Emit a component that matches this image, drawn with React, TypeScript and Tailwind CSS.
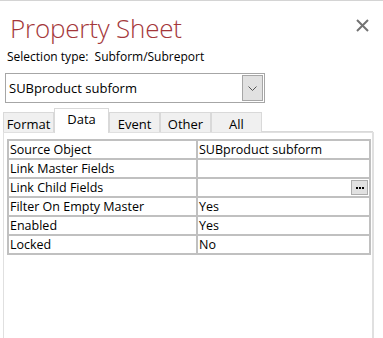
import React from 'react';

const rows = [
  { label: 'Source Object', value: 'SUBproduct subform' },
  { label: 'Link Master Fields', value: '' },
  { label: 'Link Child Fields', value: '', builder: true },
  { label: 'Filter On Empty Master', value: 'Yes' },
  { label: 'Enabled', value: 'Yes' },
  { label: 'Locked', value: 'No' },
];

const tabs = ['Format', 'Data', 'Event', 'Other', 'All'];

export default function App() {
  return (
    <div
      className="w-[383px] h-[338px] overflow-hidden bg-white border-t border-[#d4d4d4] text-black"
      style={{ fontFamily: '"Open Sans", "Noto Sans", sans-serif' }}
    >
      {/* header */}
      <div className="flex items-start justify-between h-[46px]">
        <h1 className="pl-[10px] pt-[12px] text-[26px] leading-[30px] font-light text-[#a4373a] tracking-[-0.2px]">
          Property Sheet
        </h1>
        <svg className="mt-[18px] mr-[14px]" width="13" height="13" viewBox="0 0 13 13">
          <path d="M1 1 L12 12 M12 1 L1 12" stroke="#737373" strokeWidth="2" />
        </svg>
      </div>
      <div className="pl-[7px] text-[12px] leading-[16px] h-[26px] pt-[2px]">Selection type:&nbsp; Subform/Subreport</div>

      {/* object picker */}
      <div className="ml-[5px] w-[260px] h-[30px] border border-[#a6a6a6] flex items-center justify-between pl-[3px] pr-[1px]">
        <span className="text-[13px] leading-[16px]">SUBproduct subform</span>
        <div className="w-[21px] h-[26px] bg-[#e1e1e1] border border-[#a6a6a6] flex items-center justify-center">
          <svg width="9" height="5" viewBox="0 0 9 5">
            <path d="M0.5 0.5 L4.5 4.5 L8.5 0.5" stroke="#555" fill="none" strokeWidth="1" />
          </svg>
        </div>
      </div>

      {/* tabs */}
      <div className="flex items-end pl-[3px] h-[29px]">
        {tabs.map((t) =>
          t === 'Data' ? (
            <div
              key={t}
              className="w-[55px] h-[25px] bg-white border border-b-0 border-[#d9d9d9] text-[13px] leading-[18px] pt-[1px] text-center relative top-[1px]"
            >
              {t}
            </div>
          ) : (
            <div
              key={t}
              className="w-[51px] h-[20px] bg-[#f0f0f0] border border-b-0 border-[#d9d9d9] text-[13px] leading-[18px] pt-[2px] text-center"
            >
              {t}
            </div>
          )
        )}
        <div className="flex-1 mr-[10px] border-b border-[#d9d9d9]" />
      </div>

      {/* panel */}
      <div className="ml-[3px] w-[371px] h-[210px] border-l border-r-2 border-t border-[#e0e0e0] pt-[6px] pl-[3px]">
        <div className="w-[364px] border-2 border-[#c0c0c0] bg-[#c0c0c0] grid grid-cols-[187px_1fr] gap-[2px]">
          {rows.map((r) => (
            <React.Fragment key={r.label}>
              <div className="h-[17px] bg-white text-[12.5px] leading-[17px] pl-[1px] whitespace-nowrap overflow-hidden">
                {r.label}
              </div>
              <div className="h-[17px] bg-white text-[12.5px] leading-[17px] pl-[1px] flex items-center justify-between">
                <span>{r.value}</span>
                {r.builder && (
                  <div className="w-[17px] h-[15px] mr-[1px] bg-[#e1e1e1] border border-[#adadad] flex items-center justify-center gap-[1px]">
                    <span className="w-[2px] h-[2px] bg-black" />
                    <span className="w-[2px] h-[2px] bg-black" />
                    <span className="w-[2px] h-[2px] bg-black" />
                  </div>
                )}
              </div>
            </React.Fragment>
          ))}
        </div>
      </div>
    </div>
  );
}
